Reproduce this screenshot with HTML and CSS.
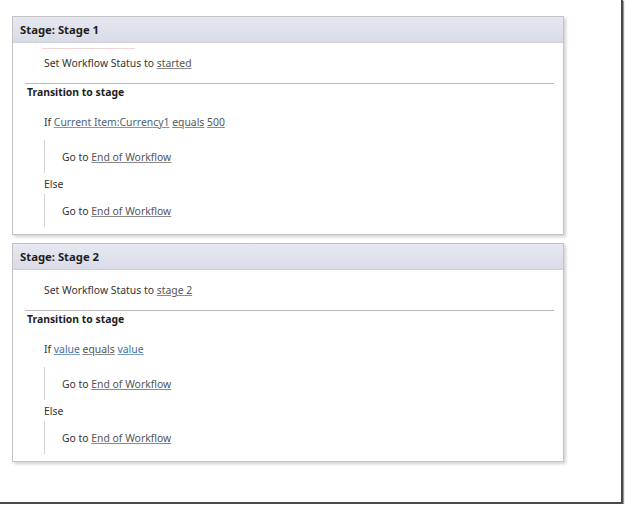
FILE: index.html
```html
<!DOCTYPE html>
<html>
<head>
<meta charset="utf-8">
<link rel="stylesheet" href="styles.css">
</head>
<body>
<div class="frame">
  <div class="stage">
    <div class="stage-head">Stage: Stage 1</div>
    <div class="stage-body">
      <div class="mark"></div>
      <div class="row status">Set Workflow Status to <span class="lnk">started</span></div>
      <div class="sep"></div>
      <div class="row trans">Transition to stage</div>
      <div class="row cond">If <span class="lnk slate">Current Item:Currency1</span> <span class="lnk">equals</span> <span class="lnk">500</span></div>
      <div class="branch first"><div class="row">Go to <span class="lnk">End of Workflow</span></div></div>
      <div class="row else">Else</div>
      <div class="branch"><div class="row">Go to <span class="lnk">End of Workflow</span></div></div>
    </div>
  </div>
  <div class="stage">
    <div class="stage-head">Stage: Stage 2</div>
    <div class="stage-body">
      <div class="row status plain">Set Workflow Status to <span class="lnk">stage 2</span></div>
      <div class="sep"></div>
      <div class="row trans">Transition to stage</div>
      <div class="row cond">If <span class="lnk blue">value</span> <span class="lnk">equals</span> <span class="lnk blue">value</span></div>
      <div class="branch first"><div class="row">Go to <span class="lnk">End of Workflow</span></div></div>
      <div class="row else">Else</div>
      <div class="branch"><div class="row">Go to <span class="lnk">End of Workflow</span></div></div>
    </div>
  </div>
</div>
</body>
</html>
```
FILE: styles.css
```css
html, body {
  margin: 0;
  padding: 0;
  background: #ffffff;
}
body {
  font-family: "Noto Sans", "Open Sans", sans-serif;
  font-size: 10.4px;
  color: #333333;
}
.frame {
  box-sizing: border-box;
  width: 623px;
  height: 504px;
  padding: 16px 0 0 12px;
  border-right: 2px solid #4a4a4a;
  border-bottom: 2px solid #4a4a4a;
  box-shadow: 1px 1px 1px #9a9a9a;
  display: flex;
  flex-direction: column;
  gap: 8px;
}
.stage {
  width: 550px;
  height: 217px;
  border: 1px solid #c4c4c4;
  background: #ffffff;
  box-shadow: 2px 2px 3px rgba(0, 0, 0, 0.18);
}
.stage-head {
  height: 25px;
  line-height: 25px;
  padding-left: 7px;
  font-size: 11.3px;
  font-weight: bold;
  color: #1e1e1e;
  background: linear-gradient(#e6e8f1, #d9dce7);
  border-bottom: 1px solid #cdd0d9;
}
.stage-body {
  padding-top: 5px;
}
.mark {
  width: 93px;
  height: 1px;
  margin-left: 29px;
  background: #f3d4d4;
}
.row {
  line-height: 16px;
  white-space: nowrap;
}
.status {
  margin-top: 6px;
  padding-left: 31px;
}
.status.plain {
  margin-top: 7px;
}
.sep {
  height: 1px;
  margin: 12px 9px 0 12px;
  background: #b9b9b9;
}
.trans {
  padding-left: 14px;
  font-weight: bold;
  color: #1e1e1e;
}
.cond {
  margin-top: 14px;
  padding-left: 31px;
}
.branch {
  margin: 2px 0 0 31px;
  padding: 9px 0 8px 17px;
  border-left: 1px solid #d2d2d2;
}
.branch.first {
  margin-top: 10px;
}
.else {
  margin-top: 3px;
  padding-left: 31px;
}
.lnk {
  color: #555555;
  text-decoration: underline;
  text-decoration-color: #8a8a8a;
}
.lnk.slate {
  color: #4e5f74;
  text-decoration-color: #8a95a3;
}
.lnk.blue {
  color: #3d6fa8;
  text-decoration-color: #7b9cc4;
}
```
